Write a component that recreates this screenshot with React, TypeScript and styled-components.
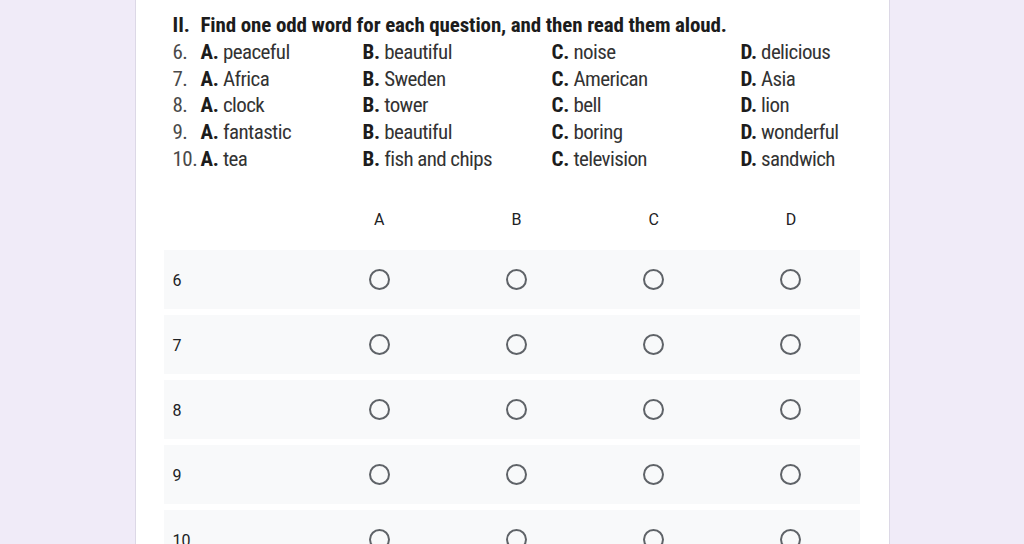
import React from "react";
import styled, { createGlobalStyle } from "styled-components";

const GlobalStyle = createGlobalStyle`
  html, body {
    margin: 0;
    padding: 0;
    background: #f0ebf8;
  }
  body {
    font-family: Roboto, "Liberation Sans", Arial, sans-serif;
  }
`;

const Page = styled.div`
  min-height: 544px;
  display: flex;
  justify-content: center;
`;

const Card = styled.section`
  width: 755px;
  box-sizing: border-box;
  background: #ffffff;
  border-left: 1px solid #dcd8e6;
  border-right: 1px solid #dcd8e6;
  padding: 12px 29px 0 28px;
`;

const Passage = styled.div`
  display: grid;
  grid-template-columns: 28px 162px 189px 189px 1fr;
  padding-left: 9px;
  font-family: "Roboto Condensed", "Liberation Sans", sans-serif;
  font-size: 21px;
  line-height: 26.8px;
  color: #2b2b2b;
  margin-bottom: 17px;
`;

const Num = styled.span<{ $bold?: boolean }>`
  font-weight: ${(p) => (p.$bold ? 700 : 400)};
  color: ${(p) => (p.$bold ? "#1c1c1c" : "#4a4a4a")};
  letter-spacing: ${(p) => (p.$bold ? "0" : "-0.5px")};
  white-space: nowrap;
`;

const Title = styled.span`
  grid-column: 2 / -1;
  font-weight: 700;
  color: #1c1c1c;
  letter-spacing: -0.13px;
  white-space: nowrap;
`;

const Option = styled.span`
  white-space: nowrap;
  color: #333333;
  letter-spacing: -0.6px;
`;

const OptLetter = styled.b`
  font-weight: 700;
  color: #1c1c1c;
  letter-spacing: -0.2px;
`;

const Grid = styled.div`
  display: flex;
  flex-direction: column;
  gap: 6px;
`;

const RowBase = styled.div`
  display: grid;
  grid-template-columns: 147px repeat(4, 1fr);
  align-items: center;
  font-size: 16px;
  color: #202124;
`;

const HeaderRow = styled(RowBase)`
  box-sizing: border-box;
  height: 54px;
  padding-top: 6px;
`;

const AnswerRow = styled(RowBase)`
  height: 59px;
  background: #f8f9fa;
`;

const ColHead = styled.div`
  text-align: center;
`;

const RowLabel = styled.div`
  padding-left: 9px;
  padding-top: 2px;
`;

const Cell = styled.div`
  display: flex;
  justify-content: center;
  align-items: center;
  padding-top: 1px;
`;

const Radio = styled.span`
  box-sizing: border-box;
  width: 21px;
  height: 21px;
  border-radius: 50%;
  border: 2px solid #5f6368;
  display: block;
`;

const questions = [
  { n: "6.", opts: ["peaceful", "beautiful", "noise", "delicious"] },
  { n: "7.", opts: ["Africa", "Sweden", "American", "Asia"] },
  { n: "8.", opts: ["clock", "tower", "bell", "lion"] },
  { n: "9.", opts: ["fantastic", "beautiful", "boring", "wonderful"] },
  { n: "10.", opts: ["tea", "fish and chips", "television", "sandwich"] },
];

const letters = ["A", "B", "C", "D"];

export default function App() {
  return (
    <Page>
      <GlobalStyle />
      <Card>
        <Passage>
          <Num $bold>II.</Num>
          <Title>Find one odd word for each question, and then read them aloud.</Title>
          {questions.map((q) => (
            <React.Fragment key={q.n}>
              <Num>{q.n}</Num>
              {q.opts.map((o, i) => (
                <Option key={i}>
                  <OptLetter>{letters[i]}.</OptLetter> {o}
                </Option>
              ))}
            </React.Fragment>
          ))}
        </Passage>
        <Grid>
          <HeaderRow>
            <div />
            {letters.map((l) => (
              <ColHead key={l}>{l}</ColHead>
            ))}
          </HeaderRow>
          {["6", "7", "8", "9", "10"].map((r) => (
            <AnswerRow key={r}>
              <RowLabel>{r}</RowLabel>
              {letters.map((l) => (
                <Cell key={l}>
                  <Radio />
                </Cell>
              ))}
            </AnswerRow>
          ))}
        </Grid>
      </Card>
    </Page>
  );
}
